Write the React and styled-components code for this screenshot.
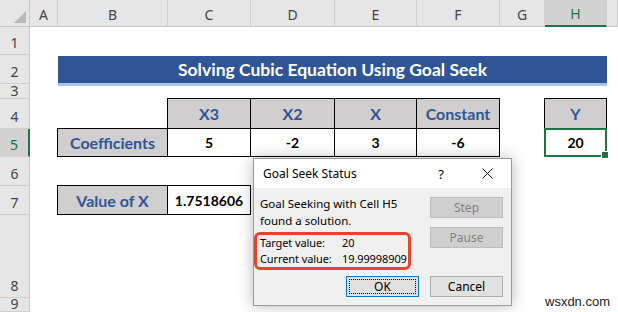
import React from "react"
import styled, { createGlobalStyle } from "styled-components"

const GlobalStyle = createGlobalStyle`
  html, body {
    margin: 0;
    padding: 0;
    background: #fff;
  }
`

const BLUE = "#2f5597"
const GREEN = "#217346"

const Sheet = styled.div`
  position: relative;
  width: 618px;
  height: 312px;
  overflow: hidden;
  display: grid;
  grid-template-columns: 30px 28px 110px 83px 84px 82px 83px 45px 62px 1fr;
  grid-template-rows: 27px 28px 29px 15px 30px 28px 29px 29px 83px 1fr;
  background: #fff;
  font-family: "Lato", "Liberation Sans", sans-serif;
`

const Corner = styled.div`
  grid-column: 1;
  grid-row: 1;
  background: #e6e6e6;
  border-right: 1px solid #c8c8c8;
  border-bottom: 1px solid #c8c8c8;
  position: relative;
  &::after {
    content: "";
    position: absolute;
    right: 3px;
    bottom: 3px;
    border-style: solid;
    border-width: 0 0 12px 12px;
    border-color: transparent transparent #b8b8b8 transparent;
  }
`

const ColHead = styled.div`
  grid-row: 1;
  grid-column: ${(p) => p.$col};
  display: flex;
  align-items: flex-end;
  justify-content: center;
  padding-bottom: 3px;
  box-sizing: border-box;
  background: ${(p) => (p.$selected ? "#d2d2d2" : "#e6e6e6")};
  border-right: 1px solid #d0d0d0;
  border-bottom: ${(p) => (p.$selected ? `2px solid ${GREEN}` : "1px solid #c8c8c8")};
  color: ${(p) => (p.$selected ? GREEN : "#444")};
  font-family: "Noto Sans", "Open Sans", sans-serif;
  font-size: 14px;
  line-height: 17px;
`

const RowHead = styled.div`
  grid-column: 1;
  grid-row: ${(p) => p.$row};
  display: flex;
  align-items: flex-end;
  justify-content: center;
  padding-bottom: ${(p) => (p.$tight ? "0" : "3px")};
  box-sizing: border-box;
  overflow: hidden;
  background: ${(p) => (p.$selected ? "#d2d2d2" : "#e6e6e6")};
  border-bottom: 1px solid #d0d0d0;
  border-right: ${(p) => (p.$selected ? `2px solid ${GREEN}` : "1px solid #c8c8c8")};
  color: ${(p) => (p.$selected ? GREEN : "#444")};
  font-family: "Noto Sans", "Open Sans", sans-serif;
  font-size: 14px;
  line-height: ${(p) => (p.$tight ? "14px" : "17px")};
`

const TitleBar = styled.div`
  grid-column: 3 / 10;
  grid-row: 3;
  align-self: start;
  margin-top: 1px;
  height: 30px;
  box-sizing: border-box;
  background: ${BLUE};
  border-bottom: 3px solid #a9c4e8;
  color: #fff;
  font-weight: 700;
  font-size: 17.5px;
  display: flex;
  align-items: center;
  justify-content: center;
  z-index: 1;
`

const Cell = styled.div`
  grid-column: ${(p) => p.$col};
  grid-row: ${(p) => p.$row};
  margin: -1px 0 0 -1px;
  border: ${(p) => (p.$selected ? `2px solid ${GREEN}` : "1px solid #000")};
  background: ${(p) => (p.$head ? "#d0cece" : "#fff")};
  color: ${(p) => (p.$head ? BLUE : "#000")};
  font-weight: 700;
  font-size: ${(p) => (p.$head ? "16px" : "14px")};
  display: flex;
  align-items: center;
  justify-content: center;
  position: relative;
  z-index: ${(p) => (p.$selected ? 2 : 1)};
`

const FillHandle = styled.span`
  position: absolute;
  right: -4px;
  bottom: -4px;
  width: 6px;
  height: 6px;
  background: ${GREEN};
  border: 1px solid #fff;
`

const Dialog = styled.div`
  position: absolute;
  left: 253px;
  top: 158px;
  width: 259px;
  height: 148px;
  box-sizing: border-box;
  border: 1px solid #9a9a9a;
  background: #f0f0f0;
  box-shadow: 0 0 14px rgba(0, 0, 0, 0.28);
  font-family: "Noto Sans", "Open Sans", sans-serif;
  font-size: 11.5px;
  color: #000;
  z-index: 5;
  display: flex;
  flex-direction: column;
`

const DialogHeader = styled.div`
  height: 29px;
  background: #fff;
  display: flex;
  align-items: center;
  padding-left: 9px;
  font-size: 12px;
`

const DialogTitle = styled.div`
  flex: 1;
`

const HelpMark = styled.span`
  width: 12px;
  text-align: center;
  font-size: 13px;
  margin-right: 35px;
`

const CloseButton = styled.svg`
  width: 11px;
  height: 11px;
  margin-right: 18px;
`

const DialogBody = styled.div`
  flex: 1;
  display: flex;
  flex-direction: column;
  padding: 7px 8px 0 0;
`

const MainRow = styled.div`
  display: flex;
  justify-content: space-between;
`

const InfoColumn = styled.div`
  display: flex;
  flex-direction: column;
`

const Message = styled.div`
  padding-left: 6px;
  line-height: 17px;
`

const ResultBox = styled.div`
  margin-top: 3px;
  width: 157px;
  box-sizing: border-box;
  border: 3px solid #e2452a;
  border-radius: 6px;
  padding-left: 3px;
`

const ResultRow = styled.div`
  display: grid;
  grid-template-columns: 82px 1fr;
  line-height: 16px;
  font-size: 11px;
  letter-spacing: -0.1px;
  white-space: nowrap;
`

const ButtonColumn = styled.div`
  display: flex;
  flex-direction: column;
  gap: 9px;
  padding-top: 2px;
`

const Button = styled.div`
  width: 73px;
  height: 21px;
  box-sizing: border-box;
  display: flex;
  align-items: center;
  justify-content: center;
  font-size: 12px;
  background: ${(p) => (p.$disabled ? "#cfcfcf" : "#e1e1e1")};
  border: 1px solid ${(p) => (p.$focused ? "#0078d7" : p.$disabled ? "#bdbdbd" : "#adadad")};
  color: ${(p) => (p.$disabled ? "#838383" : "#000")};
  position: relative;
  ${(p) =>
    p.$focused &&
    `&::after {
      content: "";
      position: absolute;
      inset: 2px;
      border: 1px dotted #000;
    }`}
`

const Footer = styled.div`
  display: flex;
  justify-content: flex-end;
  gap: 11px;
  margin-top: 6px;
`

const Watermark = styled.div`
  position: absolute;
  left: 545px;
  top: 294px;
  font-family: "Liberation Sans", Arial, sans-serif;
  font-size: 13px;
  color: #222;
  z-index: 6;
`

const columns = ["A", "B", "C", "D", "E", "F", "G", "H", ""]
const rows = ["1", "2", "3", "4", "5", "6", "7", "8", "9"]

const App = () => {
  return (
    <>
      <GlobalStyle />
      <Sheet>
        <Corner />
        {columns.map((c, i) => (
          <ColHead key={c + i} $col={i + 2} $selected={c === "H"}>
            {c}
          </ColHead>
        ))}
        {rows.map((r, i) => (
          <RowHead key={r} $row={i + 2} $selected={r === "5"} $tight={r === "3" || r === "9"}>
            {r}
          </RowHead>
        ))}

        <TitleBar>Solving Cubic Equation Using Goal Seek</TitleBar>

        <Cell $col={4} $row={5} $head>X3</Cell>
        <Cell $col={5} $row={5} $head>X2</Cell>
        <Cell $col={6} $row={5} $head>X</Cell>
        <Cell $col={7} $row={5} $head>Constant</Cell>
        <Cell $col={9} $row={5} $head>Y</Cell>

        <Cell $col={3} $row={6} $head>Coefficients</Cell>
        <Cell $col={4} $row={6}>5</Cell>
        <Cell $col={5} $row={6}>-2</Cell>
        <Cell $col={6} $row={6}>3</Cell>
        <Cell $col={7} $row={6}>-6</Cell>
        <Cell $col={9} $row={6} $selected>
          20
          <FillHandle />
        </Cell>

        <Cell $col={3} $row={8} $head>Value of X</Cell>
        <Cell $col={4} $row={8}>1.7518606</Cell>

        <Dialog>
          <DialogHeader>
            <DialogTitle>Goal Seek Status</DialogTitle>
            <HelpMark>?</HelpMark>
            <CloseButton viewBox="0 0 11 11">
              <path d="M0.5 0.5 L10.5 10.5 M10.5 0.5 L0.5 10.5" stroke="#111" strokeWidth="1" />
            </CloseButton>
          </DialogHeader>
          <DialogBody>
            <MainRow>
              <InfoColumn>
                <Message>
                  Goal Seeking with Cell H5
                  <br />
                  found a solution.
                </Message>
                <ResultBox>
                  <ResultRow>
                    <span>Target value:</span>
                    <span>20</span>
                  </ResultRow>
                  <ResultRow>
                    <span>Current value:</span>
                    <span>19.99998909</span>
                  </ResultRow>
                </ResultBox>
              </InfoColumn>
              <ButtonColumn>
                <Button $disabled>Step</Button>
                <Button $disabled>Pause</Button>
              </ButtonColumn>
            </MainRow>
            <Footer>
              <Button $focused>OK</Button>
              <Button>Cancel</Button>
            </Footer>
          </DialogBody>
        </Dialog>
        <Watermark>wsxdn.com</Watermark>
      </Sheet>
    </>
  )
}

export default App
